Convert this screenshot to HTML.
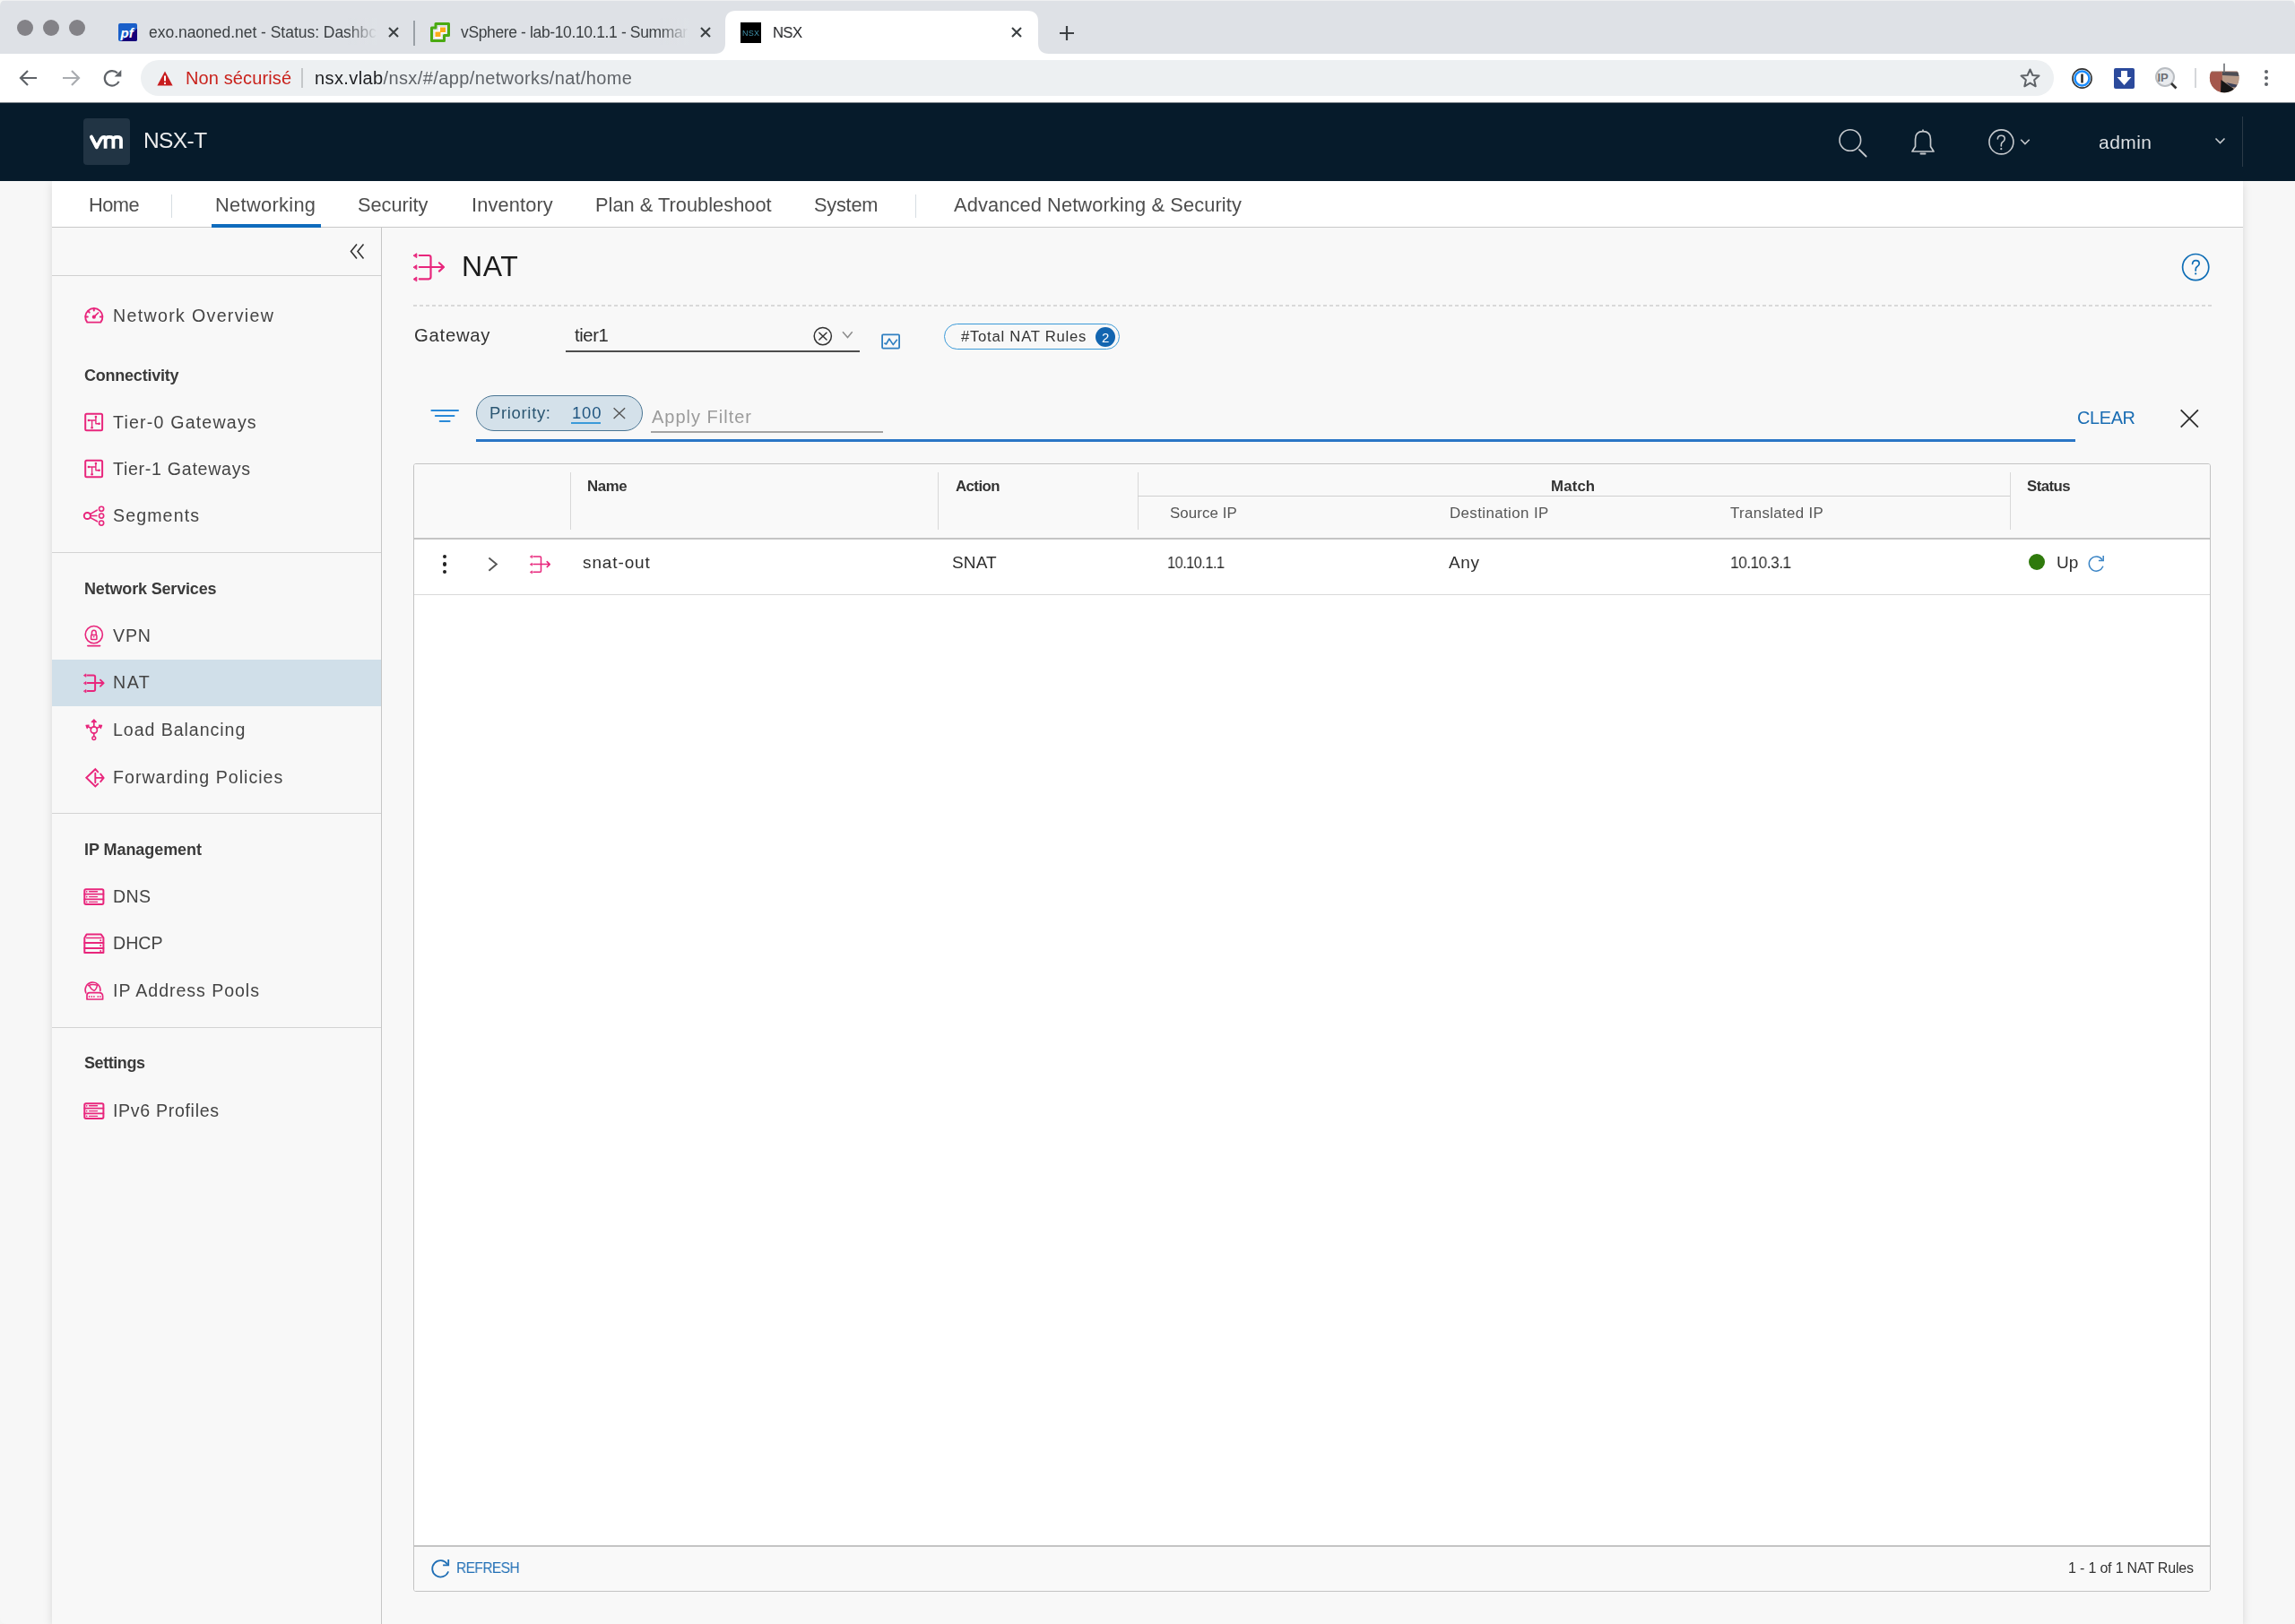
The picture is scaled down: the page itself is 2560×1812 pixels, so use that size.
<!DOCTYPE html>
<html><head><meta charset="utf-8">
<style>
*{box-sizing:border-box;margin:0;padding:0}
html,body{width:2560px;height:1812px;overflow:hidden;background:#f7f7f7;font-family:"Liberation Sans",sans-serif;position:relative}
.t{position:absolute;white-space:nowrap;line-height:1;will-change:transform}
.b{position:absolute}
svg{position:absolute;overflow:visible}
</style></head><body>

<div class="b" style="left:58px;top:202px;width:2444px;height:1610px;background:#f8f8f8;box-shadow:0 3px 10px rgba(0,0,0,.13)"></div>
<div class="b" style="left:0;top:0;width:2560px;height:60px;background:#dee1e6"></div>
<div class="b" style="left:18.6px;top:22px;width:18px;height:18px;border-radius:50%;background:#838287"></div>
<div class="b" style="left:47.6px;top:22px;width:18px;height:18px;border-radius:50%;background:#838287"></div>
<div class="b" style="left:76.8px;top:22px;width:18px;height:18px;border-radius:50%;background:#838287"></div>
<svg style="left:0;top:0" width="2560" height="60"><path d="M797 60 Q809 60 809 48 L809 24 Q809 12 821 12 L1146 12 Q1158 12 1158 24 L1158 48 Q1158 60 1170 60 Z" fill="#fff"/></svg>
<div class="b" style="left:461px;top:23px;width:2px;height:28px;background:#9aa0a6"></div>
<svg style="left:132px;top:26px" width="21" height="20" viewBox="0 0 21 20">
<rect x="0" y="0" width="21" height="20" rx="2" fill="#1a5fc9"/>
<path d="M3 20 L21 6 L21 18 Q21 20 19 20 Z" fill="#17007a"/>
<text x="2.5" y="16" font-family="Liberation Sans" font-style="italic" font-weight="bold" font-size="15" fill="#fff">pf</text>
</svg>
<div class="t" style="left:166.0px;top:28.0px;font-size:17.5px;color:#3c4043;letter-spacing:-0.03px;">exo.naoned.net - Status: Dashbc</div>
<div class="b" style="left:388px;top:20px;width:36px;height:30px;background:linear-gradient(90deg,rgba(222,225,230,0),#dee1e6 90%)"></div>
<svg style="left:480px;top:25px" width="22" height="22" viewBox="0 0 22 22">
<path d="M6 1.5 H20.5 V14.5 H15.5 V20.5 H1.5 V6 H6 Z" fill="none" stroke="#4aaa12" stroke-width="3" stroke-linejoin="round"/>
<path d="M4.5 9 H9 V5 H17.5 V12.5 H12.5 V17.5 H4.5 Z" fill="#fff"/>
<rect x="11" y="5.5" width="6" height="5.5" fill="#fbab19"/>
<rect x="5.5" y="10.5" width="6" height="5.5" fill="#fbab19"/>
</svg>
<div class="t" style="left:514.0px;top:28.0px;font-size:17.5px;color:#3c4043;letter-spacing:-0.37px;">vSphere - lab-10.10.1.1 - Summar</div>
<div class="b" style="left:736px;top:20px;width:36px;height:30px;background:linear-gradient(90deg,rgba(222,225,230,0),#dee1e6 90%)"></div>
<svg style="left:433.0px;top:30px" width="12" height="12" viewBox="0 0 12 12"><path d="M1 1 L11 11 M11 1 L1 11" stroke="#3c4043" stroke-width="2.1"/></svg>
<svg style="left:781.0px;top:30px" width="12" height="12" viewBox="0 0 12 12"><path d="M1 1 L11 11 M11 1 L1 11" stroke="#3c4043" stroke-width="2.1"/></svg>
<svg style="left:1128.4px;top:30px" width="12" height="12" viewBox="0 0 12 12"><path d="M1 1 L11 11 M11 1 L1 11" stroke="#3c4043" stroke-width="2.1"/></svg>
<div class="b" style="left:826px;top:25px;width:23px;height:23px;background:#000"></div>
<div class="t" style="left:828.0px;top:33.4px;font-size:9px;color:#3f8fa8;letter-spacing:0.25px;">NSX</div>
<div class="t" style="left:862.0px;top:27.9px;font-size:17.2px;color:#202124;letter-spacing:-0.60px;transform:scaleX(0.966);transform-origin:0 0;">NSX</div>
<svg style="left:1181px;top:28px" width="18" height="18" viewBox="0 0 18 18"><path d="M9 1 V17 M1 9 H17" stroke="#3c4043" stroke-width="2.2"/></svg>
<div class="b" style="left:0;top:60px;width:2560px;height:54px;background:#fff"></div>
<div class="b" style="left:157px;top:67px;width:2134px;height:40px;border-radius:20px;background:#edf0f2"></div>
<svg style="left:20px;top:76px" width="24" height="22" viewBox="0 0 24 22"><path d="M21 11 H4 M11 3 L3 11 L11 19" fill="none" stroke="#5f6368" stroke-width="2.2"/></svg>
<svg style="left:67px;top:76px" width="24" height="22" viewBox="0 0 24 22"><path d="M3 11 H20 M13 3 L21 11 L13 19" fill="none" stroke="#a9acb0" stroke-width="2.2"/></svg>
<svg style="left:114px;top:75px" width="24" height="24" viewBox="0 0 24 24"><path d="M18.6 15.9 A8.3 8.3 0 1 1 17 6.5" fill="none" stroke="#5f6368" stroke-width="2.2"/><path d="M13.6 10.6 L21.3 10.6 L21.3 3 Z" fill="#5f6368"/></svg>
<svg style="left:175px;top:79px" width="18" height="17" viewBox="0 0 18 17"><path d="M9 0.5 L17.6 16.5 H0.4 Z" fill="#c81c1e"/><rect x="8" y="5.5" width="2" height="6" fill="#fff"/><rect x="8" y="13" width="2" height="2" fill="#fff"/></svg>
<div class="t" style="left:207.0px;top:77.1px;font-size:20px;color:#c9221c;letter-spacing:0.12px;">Non sécurisé</div>
<div class="b" style="left:336px;top:76px;width:2px;height:22px;background:#c4c7c9"></div>
<div class="t" style="left:351.0px;top:77.1px;font-size:20px;color:#5f6368;letter-spacing:0.39px;"><span style="color:#202124">nsx.vlab</span>/nsx/#/app/networks/nat/home</div>
<svg style="left:2253px;top:76px" width="23" height="22" viewBox="0 0 23 22"><path d="M11.5 1.5 L14.4 8 L21.5 8.6 L16.1 13.3 L17.7 20.3 L11.5 16.6 L5.3 20.3 L6.9 13.3 L1.5 8.6 L8.6 8 Z" fill="none" stroke="#5f6368" stroke-width="2" stroke-linejoin="round"/></svg>
<svg style="left:2311px;top:75.5px" width="23" height="23" viewBox="0 0 23 23"><circle cx="11.5" cy="11.5" r="10.6" fill="#fff" stroke="#333" stroke-width="1.6"/><circle cx="11.5" cy="11.5" r="8" fill="none" stroke="#1a8cff" stroke-width="2.6"/><rect x="10.3" y="6.5" width="2.4" height="10" fill="#222"/></svg>
<svg style="left:2358px;top:75.5px" width="23" height="23" viewBox="0 0 23 23"><rect x="0" y="0" width="23" height="23" rx="2" fill="#2b4a9c"/><path d="M8 3 H15 V10 H19.5 L11.5 19 L3.5 10 H8 Z" fill="#fff"/></svg>
<svg style="left:2403px;top:75px" width="27" height="25" viewBox="0 0 27 25"><circle cx="12" cy="11" r="10" fill="#e9ebee" stroke="#b9bdc2" stroke-width="2"/><text x="3.5" y="16" font-family="Liberation Sans" font-weight="bold" font-size="13" fill="#6d7075">IP</text><path d="M19 18 L24.5 23.5" stroke="#333" stroke-width="2.6"/></svg>
<div class="b" style="left:2448px;top:76px;width:2px;height:22px;background:#d5d7da"></div>
<svg style="left:2464px;top:70px" width="34" height="34" viewBox="0 0 34 34"><defs><clipPath id="av"><circle cx="17.2" cy="17" r="16.3"/></clipPath></defs>
<g clip-path="url(#av)"><rect width="34" height="34" fill="#fff"/><rect x="0" y="9.5" width="34" height="25" fill="#9c6a5c"/>
<path d="M0 11 L14 10.5 L15.5 34 L0 34 Z" fill="#a4574c"/><path d="M15 10 L34 10.5 L34 34 L15 34 Z" fill="#b89a88"/>
<path d="M15 10 L34 10.5 L34 15 L15 14 Z" fill="#4d4d55"/>
<path d="M13.5 19 L19 23 L27 28.5 L31 34 L13 34 Z" fill="#161616"/><path d="M19 22 L33 25 L33 28 L25 27 Z" fill="#3b4058"/>
<rect x="16.2" y="0" width="1.6" height="11" fill="#6b6f74"/></g></svg>
<div class="b" style="left:2526px;top:77.8px;width:4.4px;height:4.4px;border-radius:50%;background:#5f6368"></div>
<div class="b" style="left:2526px;top:84.8px;width:4.4px;height:4.4px;border-radius:50%;background:#5f6368"></div>
<div class="b" style="left:2526px;top:91.8px;width:4.4px;height:4.4px;border-radius:50%;background:#5f6368"></div>
<div class="b" style="left:0;top:114px;width:2560px;height:88px;background:#061b2b"></div>
<div class="b" style="left:0;top:114px;width:2560px;height:1px;background:#7d858c"></div>
<div class="b" style="left:93px;top:132px;width:52px;height:52px;border-radius:4px;background:#213444"></div>
<svg style="left:93px;top:132px" width="52" height="52" viewBox="0 0 52 52" fill="none" stroke="#fff" stroke-width="3.8">
<path d="M8.9 20.6 L14.8 32.2 L19.8 22.6 Q21.3 20.8 23 20.8 Q24.6 20.8 24.6 23.5 V33.7" stroke-linejoin="round"/>
<path d="M24.6 24 Q24.6 20.8 29 20.8 Q33.4 20.8 33.4 24 V33.7 M33.4 24 Q33.4 20.8 37.7 20.8 Q42 20.8 42 24 V33.7"/>
<path d="M8.9 20.6 L14.8 32.2" stroke-linecap="round"/>
</svg>
<div class="t" style="left:160.0px;top:145.3px;font-size:24.5px;color:#ececec;letter-spacing:-0.60px;transform:scaleX(0.994);transform-origin:0 0;">NSX-T</div>
<svg style="left:2040px;top:130px" width="50" height="50" viewBox="0 0 50 50"><circle cx="23.8" cy="26.5" r="11.8" fill="none" stroke="#c4c8cc" stroke-width="1.6"/><path d="M34 37 L41.6 44.5" stroke="#c4c8cc" stroke-width="1.8" stroke-linecap="round"/></svg>
<svg style="left:2125px;top:138px" width="40" height="40" viewBox="0 0 40 40"><path d="M8 31 L11.5 25.5 V17.5 Q11.5 8.7 20 8.7 Q28.5 8.7 28.5 17.5 V25.5 L32 31 Z" fill="none" stroke="#c4c8cc" stroke-width="1.7" stroke-linejoin="round"/><path d="M20 6.5 V8.7" stroke="#c4c8cc" stroke-width="1.7"/><path d="M17.5 33.5 H22.5" stroke="#c4c8cc" stroke-width="2" stroke-linecap="round"/></svg>
<svg style="left:2212px;top:138px" width="60" height="40" viewBox="0 0 60 40"><circle cx="20.4" cy="20.4" r="13.5" fill="none" stroke="#c4c8cc" stroke-width="1.6"/><path d="M16.3 17 Q16.5 13.2 20.3 13.2 Q24.2 13.2 24.2 16.8 Q24.2 19.2 21.8 20.5 Q20.3 21.3 20.3 23.8 V25" fill="none" stroke="#c4c8cc" stroke-width="1.6" stroke-linecap="round"/><circle cx="20.3" cy="28.2" r="1.1" fill="#c4c8cc"/><path d="M42.2 17.8 L46.9 22.6 L51.7 17.8" fill="none" stroke="#c4c8cc" stroke-width="1.6"/></svg>
<div class="t" style="left:2341.0px;top:148.2px;font-size:21px;color:#dcdfe2;letter-spacing:0.46px;">admin</div>
<svg style="left:2466px;top:150px" width="20" height="14" viewBox="0 0 20 14"><path d="M5.5 4.5 L10.5 9.5 L15.5 4.5" fill="none" stroke="#c4c8cc" stroke-width="1.6"/></svg>
<div class="b" style="left:2500.5px;top:130px;width:1px;height:56px;background:#2b3a47"></div>
<div class="b" style="left:58px;top:202px;width:2444px;height:52px;background:#fff;border-bottom:1px solid #c8c8c8"></div>
<div class="t" style="left:99.4px;top:217.5px;font-size:21.8px;color:#4e4e4e;letter-spacing:-0.52px;">Home</div>
<div class="b" style="left:191px;top:217px;width:1px;height:26px;background:#d6dde2"></div>
<div class="t" style="left:240.0px;top:217.5px;font-size:21.8px;color:#4e4e4e;letter-spacing:0.33px;">Networking</div>
<div class="b" style="left:235.6px;top:250px;width:122.4px;height:4px;background:#0f6cbd"></div>
<div class="t" style="left:399.3px;top:217.5px;font-size:21.8px;color:#4e4e4e;letter-spacing:-0.05px;">Security</div>
<div class="t" style="left:525.8px;top:217.5px;font-size:21.8px;color:#4e4e4e;letter-spacing:0.13px;">Inventory</div>
<div class="t" style="left:664.0px;top:217.5px;font-size:21.8px;color:#4e4e4e;letter-spacing:0.02px;">Plan &amp; Troubleshoot</div>
<div class="t" style="left:908.0px;top:217.5px;font-size:21.8px;color:#4e4e4e;letter-spacing:-0.24px;">System</div>
<div class="b" style="left:1021px;top:217px;width:1px;height:26px;background:#d6dde2"></div>
<div class="t" style="left:1064.0px;top:217.5px;font-size:21.8px;color:#4e4e4e;letter-spacing:0.12px;">Advanced Networking &amp; Security</div>
<div class="b" style="left:425px;top:254px;width:1px;height:1558px;background:#c6c6c6"></div>
<div class="b" style="left:58px;top:307px;width:367px;height:1px;background:#d0d0d0"></div>
<svg style="left:388px;top:270px" width="22" height="22" viewBox="0 0 22 22"><path d="M10 2.5 L3.5 10.5 L10 18.5 M17.5 2.5 L11 10.5 L17.5 18.5" fill="none" stroke="#333" stroke-width="1.6"/></svg>
<div class="t" style="left:126.0px;top:342.9px;font-size:19.6px;color:#444;letter-spacing:1.33px;">Network Overview</div>
<svg style="left:88px;top:335px" width="40" height="30" viewBox="0 0 40 30" fill="none" stroke="#e8267c" stroke-width="2" stroke-linecap="round" stroke-linejoin="round"><path d="M9.3 24.6 A9.6 9.6 0 1 1 24.3 24.6 Z" stroke-width="1.9"/><path d="M16.8 9.6 V11.6 M7.6 18.6 H9.8 M23.8 18.6 H26 M10.4 12.2 L11.8 13.6"/><circle cx="16.8" cy="18.7" r="2.1" fill="#e8267c" stroke="none"/><path d="M16.8 18.7 L21.6 14" stroke-width="1.7"/></svg>
<div class="t" style="left:94.0px;top:410.4px;font-size:18px;color:#3a3a3a;letter-spacing:-0.23px;font-weight:bold;">Connectivity</div>
<div class="t" style="left:126.0px;top:461.8px;font-size:19.6px;color:#444;letter-spacing:1.19px;">Tier-0 Gateways</div>
<svg style="left:88px;top:455px" width="40" height="30" viewBox="0 0 40 30" fill="none" stroke="#e8267c" stroke-width="2" stroke-linecap="round" stroke-linejoin="round"><rect x="7.2" y="6.8" width="18.9" height="18.5" rx="1.5"/><path d="M10.9 14 H18.9 M18.9 10.1 V17.8 H22.6 M14.6 14 V22.2" stroke-width="1.4"/><circle cx="10.9" cy="14" r="1.3" fill="#e8267c" stroke="none"/><circle cx="18.9" cy="10.1" r="1.3" fill="#e8267c" stroke="none"/><circle cx="22.6" cy="17.8" r="1.3" fill="#e8267c" stroke="none"/><circle cx="14.6" cy="22.2" r="1.3" fill="#e8267c" stroke="none"/></svg>
<div class="t" style="left:126.0px;top:514.4px;font-size:19.6px;color:#444;letter-spacing:0.71px;">Tier-1 Gateways</div>
<svg style="left:88px;top:507px" width="40" height="30" viewBox="0 0 40 30" fill="none" stroke="#e8267c" stroke-width="2" stroke-linecap="round" stroke-linejoin="round"><rect x="7.2" y="6.8" width="18.9" height="18.5" rx="1.5"/><path d="M10.9 14 H18.9 M18.9 10.1 V17.8 H22.6 M14.6 14 V22.2" stroke-width="1.4"/><circle cx="10.9" cy="14" r="1.3" fill="#e8267c" stroke="none"/><circle cx="18.9" cy="10.1" r="1.3" fill="#e8267c" stroke="none"/><circle cx="22.6" cy="17.8" r="1.3" fill="#e8267c" stroke="none"/><circle cx="14.6" cy="22.2" r="1.3" fill="#e8267c" stroke="none"/></svg>
<div class="t" style="left:126.0px;top:566.4px;font-size:19.6px;color:#444;letter-spacing:1.11px;">Segments</div>
<svg style="left:88px;top:560px" width="40" height="30" viewBox="0 0 40 30" fill="none" stroke="#e8267c" stroke-width="2" stroke-linecap="round" stroke-linejoin="round"><circle cx="9.4" cy="15.5" r="3.6"/><circle cx="25.1" cy="7.8" r="2.6" stroke-width="1.6"/><circle cx="25.1" cy="15.6" r="2.6" stroke-width="1.6"/><circle cx="25.1" cy="23.6" r="2.6" stroke-width="1.6"/><path d="M12.5 13.6 L20.2 9.2 M13 15.5 H19.8 M12.5 17.4 L20.5 21.8" stroke-width="1.6"/></svg>
<div class="b" style="left:58px;top:615.5px;width:367px;height:1px;background:#d3d3d3"></div>
<div class="t" style="left:94.0px;top:648.1px;font-size:18px;color:#3a3a3a;letter-spacing:-0.17px;font-weight:bold;">Network Services</div>
<div class="t" style="left:126.0px;top:700.4px;font-size:19.6px;color:#444;letter-spacing:0.86px;">VPN</div>
<svg style="left:88px;top:692px" width="40" height="30" viewBox="0 0 40 30" fill="none" stroke="#e8267c" stroke-width="2" stroke-linecap="round" stroke-linejoin="round"><circle cx="16.8" cy="16.1" r="9.6" stroke-width="1.6"/><rect x="13.6" y="16.4" width="6.3" height="5.2" rx="0.8" stroke-width="1.5"/><path d="M14.4 16.3 V14 Q14.4 11.2 16.8 11.2 Q19.2 11.2 19.2 14 V16.3" stroke-width="1.5"/><circle cx="16.7" cy="18.6" r="0.8" fill="#e8267c" stroke="none"/><path d="M9.8 28.6 H23.6" stroke-width="1.6"/></svg>
<div class="b" style="left:58px;top:736px;width:367px;height:52px;background:#d0dfe9"></div>
<div class="t" style="left:126.0px;top:752.3px;font-size:19.6px;color:#444;letter-spacing:1.48px;">NAT</div>
<svg style="left:88px;top:746px" width="40" height="30" viewBox="0 0 40 30" fill="none" stroke="#e8267c" stroke-width="2" stroke-linecap="round" stroke-linejoin="round"><g transform="scale(1.0)"><path d="M9.6 7.4 H16.4 Q18.1 7.4 18.1 9.1 V23.3 Q18.1 25 16.4 25 H9.6 M9.6 16.1 H27.3 M24 12.6 L27.6 16.1 L24 19.6" stroke-width="2.0"/><path d="M5.6 7.4 L8 5.9 V8.9 Z M5.6 16.1 L8 14.6 V17.6 Z M5.6 25 L8 23.5 V26.5 Z" fill="#e8267c" stroke-width="0.8"/></g></svg>
<div class="t" style="left:126.0px;top:805.1px;font-size:19.6px;color:#444;letter-spacing:0.94px;">Load Balancing</div>
<svg style="left:88px;top:798px" width="40" height="30" viewBox="0 0 40 30" fill="none" stroke="#e8267c" stroke-width="2" stroke-linecap="round" stroke-linejoin="round"><circle cx="16.8" cy="16.5" r="3.6" stroke-width="1.7"/><path d="M16.8 12.9 V6" stroke-width="1.7"/><path d="M14.2 7.6 L16.8 4.8 L19.4 7.6 Z" fill="#e8267c" stroke-width="1.2"/><path d="M13.7 14.6 L9.2 12.3 M19.9 14.6 L24.4 12.3 M16.8 20.1 V23.6" stroke-width="1.7"/><path d="M8 11.3 L11.1 11.1 L9.2 14.6 Z M25.6 11.3 L22.5 11.1 L24.4 14.6 Z" fill="#e8267c" stroke-width="1.2"/><circle cx="16.8" cy="25.6" r="1.9" stroke-width="1.5"/></svg>
<div class="t" style="left:126.0px;top:857.9px;font-size:19.6px;color:#444;letter-spacing:1.02px;">Forwarding Policies</div>
<svg style="left:88px;top:851px" width="40" height="30" viewBox="0 0 40 30" fill="none" stroke="#e8267c" stroke-width="2" stroke-linecap="round" stroke-linejoin="round"><path d="M21.3 10.4 L18.3 7.2 L8.3 16.8 L18.3 26.4 L21.3 23.6 M18.3 11.8 V22.2 M18.3 16.9 H27 M24.2 12.6 L27.6 16.9 L24.2 21.2" stroke-width="1.9" stroke-linejoin="miter"/></svg>
<div class="b" style="left:58px;top:906.5px;width:367px;height:1px;background:#d3d3d3"></div>
<div class="t" style="left:94.0px;top:938.8px;font-size:18px;color:#3a3a3a;letter-spacing:-0.06px;font-weight:bold;">IP Management</div>
<div class="t" style="left:126.0px;top:990.7px;font-size:19.6px;color:#444;letter-spacing:0.30px;">DNS</div>
<svg style="left:88px;top:985px" width="40" height="30" viewBox="0 0 40 30" fill="none" stroke="#e8267c" stroke-width="2" stroke-linecap="round" stroke-linejoin="round"><rect x="6.3" y="7.2" width="21.1" height="16.7" rx="1.6"/><path d="M6.3 12.6 H27.4 M6.3 18.4 H27.4" stroke-width="1.7"/><path d="M11.6 9.8 H20.5 M11.6 15.6 H20.5 M11.6 21.4 H20.5" stroke-width="1.4"/><circle cx="8.7" cy="9.8" r="0.9" fill="#e8267c" stroke="none"/><circle cx="8.7" cy="15.6" r="0.9" fill="#e8267c" stroke="none"/><circle cx="8.7" cy="21.4" r="0.9" fill="#e8267c" stroke="none"/></svg>
<div class="t" style="left:126.0px;top:1043.4px;font-size:19.6px;color:#444;letter-spacing:0.03px;">DHCP</div>
<svg style="left:88px;top:1038px" width="40" height="30" viewBox="0 0 40 30" fill="none" stroke="#e8267c" stroke-width="2" stroke-linecap="round" stroke-linejoin="round"><path d="M8.6 4.6 H24.8 L27.4 8.4 V25.1 H6.3 V8.4 Z"/><path d="M6.3 14 H27.4 M6.3 20 H27.4" stroke-width="1.8"/><path d="M8.6 8.4 H25" stroke-width="1.5"/><circle cx="24.2" cy="11.2" r="1" fill="#e8267c" stroke="none"/><circle cx="24.2" cy="17" r="1" fill="#e8267c" stroke="none"/><circle cx="24.2" cy="23" r="1" fill="#e8267c" stroke="none"/></svg>
<div class="t" style="left:126.0px;top:1095.9px;font-size:19.6px;color:#444;letter-spacing:0.94px;">IP Address Pools</div>
<svg style="left:88px;top:1090px" width="40" height="30" viewBox="0 0 40 30" fill="none" stroke="#e8267c" stroke-width="2" stroke-linecap="round" stroke-linejoin="round"><path d="M7.8 17.8 A8.4 8.4 0 1 1 23.8 15.6" stroke-width="1.6"/><path d="M10.6 9.6 Q15 7.4 20.6 9.2 M11.5 9.5 Q13.5 14 17 15.4 Q19.6 14 20.4 9.4" stroke-width="1.5"/><path d="M9 25 V20.5 Q9 17.6 12 17.6 H22.6 Q26.6 17.6 26.6 21.6 V25 Z" stroke-width="1.7"/><path d="M11.6 21.9 V22.2 M14.3 21.9 V22.2 M16.9 21.9 V22.2 M21.3 21.9 V22.2 M23.8 21.9 V22.2" stroke-width="1.6"/></svg>
<div class="b" style="left:58px;top:1145.5px;width:367px;height:1px;background:#d3d3d3"></div>
<div class="t" style="left:94.0px;top:1177.4px;font-size:18px;color:#3a3a3a;letter-spacing:-0.43px;font-weight:bold;">Settings</div>
<div class="t" style="left:126.0px;top:1229.9px;font-size:19.6px;color:#444;letter-spacing:0.67px;">IPv6 Profiles</div>
<svg style="left:88px;top:1224px" width="40" height="30" viewBox="0 0 40 30" fill="none" stroke="#e8267c" stroke-width="2" stroke-linecap="round" stroke-linejoin="round"><rect x="6.3" y="7.2" width="21.1" height="16.7" rx="1.6"/><path d="M6.3 12.6 H27.4 M6.3 18.4 H27.4" stroke-width="1.7"/><path d="M11.6 9.8 H20.5 M11.6 15.6 H20.5 M11.6 21.4 H20.5" stroke-width="1.4"/><circle cx="8.7" cy="9.8" r="0.9" fill="#e8267c" stroke="none"/><circle cx="8.7" cy="15.6" r="0.9" fill="#e8267c" stroke="none"/><circle cx="8.7" cy="21.4" r="0.9" fill="#e8267c" stroke="none"/></svg>
<svg style="left:455px;top:275px" width="50" height="45" viewBox="0 0 50 45" fill="none" stroke="#e8267c" stroke-width="2.2" stroke-linecap="round" stroke-linejoin="round">
<path d="M12.8 10 H23.3 Q25.5 10 25.5 12.2 V34.1 Q25.5 36.3 23.3 36.3 H12.8 M12.8 23 H39.8 M34.9 18.3 L40 23 L34.9 27.6"/>
<path d="M6.4 10 L9.8 7.8 V12.2 Z M6.4 23 L9.8 20.8 V25.2 Z M6.4 36.3 L9.8 34.1 V38.5 Z" fill="#e8267c" stroke-width="1"/></svg>
<div class="t" style="left:515.0px;top:280.9px;font-size:32px;color:#1b1b1b;letter-spacing:0.55px;">NAT</div>
<div class="b" style="left:461px;top:340px;width:2006px;height:2px;background:repeating-linear-gradient(90deg,#d9d9d9 0 4px,transparent 4px 7px)"></div>
<svg style="left:2430px;top:279px" width="40" height="40" viewBox="0 0 40 40" fill="none" stroke="#0f6eb6" stroke-width="1.7" stroke-linecap="round"><circle cx="19.2" cy="19.1" r="14.6"/><path d="M15.6 15.5 Q15.8 11.6 19.4 11.6 Q23.2 11.6 23.2 15 Q23.2 17.3 20.8 18.6 Q19.2 19.5 19.2 21.8 V23"/><circle cx="19.2" cy="26.4" r="1.1" fill="#0f6eb6" stroke="none"/></svg>
<div class="t" style="left:461.5px;top:364.1px;font-size:20.3px;color:#333;letter-spacing:0.73px;">Gateway</div>
<div class="t" style="left:641.0px;top:364.1px;font-size:20.3px;color:#2b2b2b;letter-spacing:-0.42px;">tier1</div>
<div class="b" style="left:631px;top:391px;width:328px;height:2px;background:#4d4d4d"></div>
<svg style="left:900px;top:355px" width="60" height="40" viewBox="0 0 60 40" fill="none" stroke-linecap="round"><circle cx="17.8" cy="20.1" r="9.6" stroke="#333" stroke-width="1.5"/><path d="M13.9 16.2 L22 24 M22 16.2 L13.9 24" stroke="#333" stroke-width="1.5"/><path d="M40 15.2 L45.5 21.5 L50.7 15.2" stroke="#8c8c8c" stroke-width="1.5" stroke-linecap="butt"/></svg>
<svg style="left:980px;top:370px" width="28" height="24" viewBox="0 0 28 24" fill="none" stroke="#2f7fc1" stroke-width="1.8" stroke-linejoin="round"><rect x="4.1" y="3.4" width="19" height="15.2" rx="1"/><path d="M6.4 12.7 L8.5 14 L11.9 8 L16.3 14.6 L20.8 8.8" stroke-width="1.6"/></svg>
<div class="b" style="left:1053px;top:360.8px;width:196px;height:29.7px;border:1.6px solid #3b9ad8;border-radius:15px"></div>
<div class="t" style="left:1072.0px;top:367.7px;font-size:16.7px;color:#333;letter-spacing:0.74px;">#Total NAT Rules</div>
<div class="b" style="left:1221.5px;top:364.8px;width:22px;height:22px;border-radius:50%;background:#1265b0"></div>
<div class="t" style="left:1228.5px;top:369.3px;font-size:15px;color:#fff;letter-spacing:0.00px;">2</div>
<svg style="left:476px;top:452px" width="40" height="24" viewBox="0 0 40 24" stroke="#2a8ad8" stroke-width="2" stroke-linecap="round"><path d="M5.4 5.9 H35 M9.8 11.9 H30.5 M14.7 17.9 H25.6"/></svg>
<div class="b" style="left:531px;top:441px;width:186px;height:40px;border:1.6px solid #4a7593;border-radius:20px;background:#d4e1ea"></div>
<div class="t" style="left:546.3px;top:451.9px;font-size:18.5px;color:#2b5672;letter-spacing:0.66px;">Priority:</div>
<div class="t" style="left:637.8px;top:451.9px;font-size:18.5px;color:#1f5580;letter-spacing:0.78px;">100</div>
<div class="b" style="left:637.2px;top:471px;width:33.3px;height:1.6px;background:#3a9ad9"></div>
<svg style="left:680px;top:451px" width="22" height="22" viewBox="0 0 22 22" stroke="#555" stroke-width="1.4"><path d="M4.6 4.2 L17.1 16.1 M17.1 4.2 L4.6 16.1"/></svg>
<div class="t" style="left:726.8px;top:455.4px;font-size:20px;color:#9b9b9b;letter-spacing:1.00px;">Apply Filter</div>
<div class="b" style="left:726px;top:481px;width:258.6px;height:1.8px;background:#a3a3a3"></div>
<div class="b" style="left:531px;top:490px;width:1784.4px;height:2.7px;background:#2a76c6"></div>
<div class="t" style="left:2317.0px;top:457.2px;font-size:19.9px;color:#1a6db3;letter-spacing:-0.34px;">CLEAR</div>
<svg style="left:2430px;top:455px" width="24" height="24" viewBox="0 0 24 24" stroke="#2d2d2d" stroke-width="1.8"><path d="M2.7 2.3 L21.9 21.6 M21.9 2.3 L2.7 21.6"/></svg>
<div class="b" style="left:461px;top:517px;width:2005px;height:1259px;border:1px solid #c3c3c3;border-radius:3px;background:#fff;overflow:hidden"><div class="b" style="left:0;top:0;width:2003px;height:84px;background:#f9f9f9;border-bottom:2px solid #c4c4c4"></div><div class="b" style="left:0;top:1206px;width:2003px;height:51px;background:#f9f9f9;border-top:2px solid #c4c4c4"></div></div>
<div class="b" style="left:635.8px;top:527px;width:1px;height:64px;background:#d8d8d8"></div>
<div class="b" style="left:1045.9px;top:527px;width:1px;height:64px;background:#d8d8d8"></div>
<div class="b" style="left:1268.5px;top:527px;width:1px;height:64px;background:#d8d8d8"></div>
<div class="b" style="left:2241.5px;top:527px;width:1px;height:64px;background:#d8d8d8"></div>
<div class="b" style="left:1269px;top:552.5px;width:973px;height:1.2px;background:#cfcfcf"></div>
<div class="t" style="left:655.0px;top:534.8px;font-size:16.8px;color:#333;letter-spacing:-0.35px;font-weight:bold;">Name</div>
<div class="t" style="left:1065.6px;top:534.8px;font-size:16.8px;color:#333;letter-spacing:-0.55px;font-weight:bold;">Action</div>
<div class="t" style="left:1730.4px;top:534.8px;font-size:16.8px;color:#333;letter-spacing:0.16px;font-weight:bold;">Match</div>
<div class="t" style="left:2260.5px;top:534.8px;font-size:16.8px;color:#333;letter-spacing:-0.52px;font-weight:bold;">Status</div>
<div class="t" style="left:1305.0px;top:564.8px;font-size:16.9px;color:#565656;letter-spacing:0.06px;">Source IP</div>
<div class="t" style="left:1617.0px;top:564.8px;font-size:16.9px;color:#565656;letter-spacing:0.39px;">Destination IP</div>
<div class="t" style="left:1929.7px;top:564.8px;font-size:16.9px;color:#565656;letter-spacing:0.32px;">Translated IP</div>
<div class="b" style="left:462px;top:663px;width:2003px;height:1px;background:#d9d9d9"></div>
<div class="b" style="left:493.8px;top:619.0px;width:4.4px;height:4.4px;border-radius:50%;background:#222"></div>
<div class="b" style="left:493.8px;top:627.4px;width:4.4px;height:4.4px;border-radius:50%;background:#222"></div>
<div class="b" style="left:493.8px;top:635.9px;width:4.4px;height:4.4px;border-radius:50%;background:#222"></div>
<svg style="left:540px;top:618px" width="20" height="24" viewBox="0 0 20 24"><path d="M5.4 4.4 L13.9 11.5 L5.4 18.8" fill="none" stroke="#555" stroke-width="1.9"/></svg>
<svg style="left:586px;top:614px" width="32" height="30" viewBox="0 0 32 30" fill="none" stroke="#e8267c" stroke-width="1.5" stroke-linecap="round" stroke-linejoin="round"><path d="M9 7 H16.5 Q17.5 7 17.5 8 V23.2 Q17.5 24.2 16.5 24.2 H9 M9 15.6 H27 M24.2 12.6 L27.3 15.6 L24.2 18.6"/><path d="M5.5 7 L7.6 5.7 V8.3 Z M5.5 15.6 L7.6 14.3 V16.9 Z M5.5 24.2 L7.6 22.9 V25.5 Z" fill="#e8267c" stroke-width="0.7"/></svg>
<div class="t" style="left:650.4px;top:618.1px;font-size:19px;color:#2e2e2e;letter-spacing:0.88px;">snat-out</div>
<div class="t" style="left:1062.0px;top:618.1px;font-size:19px;color:#2e2e2e;letter-spacing:0.15px;">SNAT</div>
<div class="t" style="left:1302.2px;top:618.1px;font-size:19px;color:#2e2e2e;letter-spacing:-0.60px;transform:scaleX(0.860);transform-origin:0 0;">10.10.1.1</div>
<div class="t" style="left:1616.0px;top:618.1px;font-size:19px;color:#2e2e2e;letter-spacing:0.64px;">Any</div>
<div class="t" style="left:1929.7px;top:618.1px;font-size:19px;color:#2e2e2e;letter-spacing:-0.60px;transform:scaleX(0.916);transform-origin:0 0;">10.10.3.1</div>
<div class="b" style="left:2262.7px;top:617.8px;width:18px;height:18px;border-radius:50%;background:#2f7a0c"></div>
<div class="t" style="left:2293.9px;top:617.9px;font-size:19px;color:#2e2e2e;letter-spacing:0.03px;">Up</div>
<svg style="left:0;top:0" width="2560" height="1812" fill="none" stroke="#3a84c5" stroke-width="1.5" stroke-linecap="round"><path d="M2345.66 632.23 A8 8 0 1 1 2344.73 624.34"/><path d="M2340.9 625.6 H2346.2 V620.1" stroke-linejoin="miter" stroke-linecap="butt"/></svg>
<svg style="left:0;top:0" width="2560" height="1812" fill="none" stroke="#1f6eb5" stroke-width="1.8" stroke-linecap="round"><path d="M499.87 1753.99 A9.2 9.2 0 1 1 498.80 1744.93"/><path d="M494.1 1746.4 H500.2 V1739.9" stroke-linejoin="miter" stroke-linecap="butt"/></svg>
<div class="t" style="left:509.4px;top:1742.1px;font-size:16.6px;color:#1f6eb5;letter-spacing:-0.60px;transform:scaleX(0.933);transform-origin:0 0;">REFRESH</div>
<div class="t" style="left:2307.0px;top:1742.3px;font-size:16px;color:#333;letter-spacing:-0.18px;">1 - 1 of 1 NAT Rules</div>
<div class="b" style="left:0;top:0;width:2560px;height:1px;background:#eeeff1"></div>
<svg style="left:0;top:0" width="2560" height="1812"><path d="M0 0 H7 Q0 0 0 7 Z M2560 0 H2553 Q2560 0 2560 7 Z M0 1812 V1804 Q0 1812 8 1812 Z M2560 1812 V1804 Q2560 1812 2552 1812 Z" fill="#f4f5f4"/></svg>
</body></html>
